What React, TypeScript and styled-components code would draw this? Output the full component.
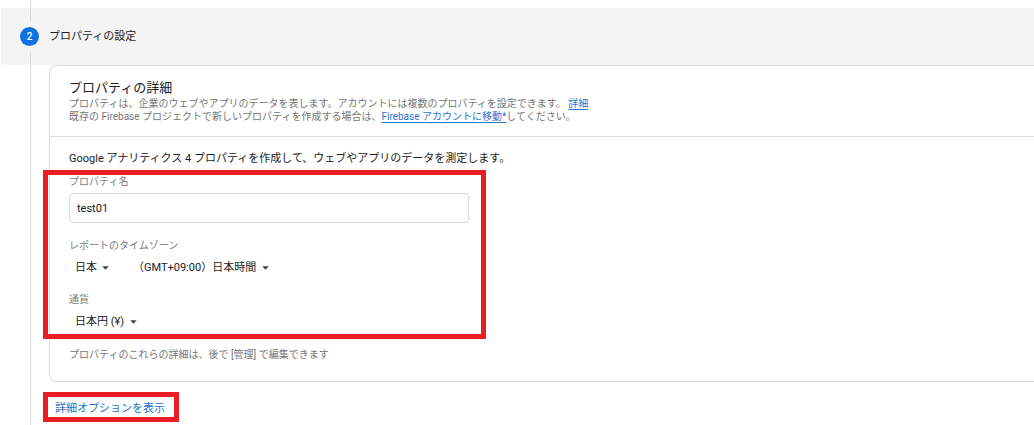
import React from 'react';
import styled, { createGlobalStyle } from 'styled-components';

const GlobalStyle = createGlobalStyle`
  *, *::before, *::after { box-sizing: border-box; }
  body {
    margin: 0;
    background: #fff;
    color: #202124;
    font-family: Roboto, "Noto Sans CJK JP", sans-serif;
    font-size: 11px;
    line-height: 16px;
  }
  button, input, select { font: inherit; color: inherit; }
  h2, h3, p { margin: 0; font-weight: 400; }
`;

const Page = styled.main`
  display: flex;
  flex-direction: column;
  min-height: 100vh;
  overflow: hidden;
`;

const Connector = styled.div<{ $height: number }>`
  width: 1px;
  height: ${p => p.$height}px;
  background: #d8d8d8;
`;

const LeadIn = styled.div`
  padding-left: 30px;
`;

const StepHeader = styled.header`
  display: flex;
  align-items: center;
  gap: 10px;
  margin-left: 1px;
  padding-left: 19px;
  background: #f4f4f4;
`;

const StepMarker = styled.div`
  display: flex;
  flex-direction: column;
  gap: 6px;
  width: 19px;

  ${Connector} { margin-left: 10px; }
`;

const StepNumber = styled.span`
  display: flex;
  align-items: center;
  justify-content: center;
  width: 19px;
  height: 19px;
  border-radius: 50%;
  background: #0b74e0;
  color: #fff;
  font-size: 10px;
  font-weight: 500;
`;

const StepTitle = styled.h2`
  font-size: 11px;
`;

const StepBody = styled.div`
  flex: 1;
  margin-left: 30px;
  padding: 0 0 8px 18px;
  border-left: 1px solid #d8d8d8;
`;

const Card = styled.section`
  border: 1px solid #d9dadc;
  border-right: 0;
  border-radius: 8px 0 0 8px;
`;

const CardHeader = styled.div`
  padding: 13px 19px;
  border-bottom: 1px solid #dedede;
`;

const CardTitle = styled.h3`
  font-size: 13px;
  line-height: 18px;
`;

const Hint = styled.p`
  color: #757575;
  font-size: 10px;
  line-height: 13px;
`;

const InlineLink = styled.a`
  color: #2a75d0;
  text-decoration: underline;
  text-underline-offset: 2px;
`;

const CardContent = styled.div`
  display: flex;
  flex-direction: column;
  padding: 14px 19px 20px;
`;

const Fields = styled.div`
  position: relative;
  display: flex;
  flex-direction: column;
  gap: 14px;
  max-width: 400px;
  margin: 8px 0 15px;
`;

const Field = styled.div`
  display: flex;
  flex-direction: column;
  gap: 4px;
`;

const Label = styled.label`
  color: #7b7b7b;
  font-size: 10px;
  line-height: 14px;
`;

const TextInput = styled.input`
  width: 100%;
  height: 30px;
  margin: 0 0 2px;
  padding: 0 7px;
  border: 1px solid #dadada;
  border-radius: 4px;
  background: #fff;
  outline: 0;
`;

const SelectRow = styled.div`
  display: flex;
  gap: 24px;
  padding-left: 6px;
`;

const SelectBox = styled.span`
  display: inline-flex;
  align-items: center;
  gap: 5px;
  height: 22px;
`;

const Select = styled.select`
  appearance: none;
  height: 22px;
  padding: 0;
  border: 0;
  background: transparent;
  outline: 0;
`;

const Highlight = styled.span<{ $inset: string }>`
  position: absolute;
  inset: ${p => p.$inset};
  border: 5px solid #eb1c24;
  pointer-events: none;
`;

const OptionsButton = styled.button`
  position: relative;
  display: block;
  margin: 19px 0 0 6px;
  padding: 0;
  border: 0;
  background: transparent;
  color: #1a73c8;
`;

const Caret = () => (
  <svg width="7" height="4" viewBox="0 0 7 4" aria-hidden="true">
    <path d="M0.3 0.3h6.4L3.5 3.7z" fill="#3c4043" />
  </svg>
);

function Dropdown({ id, label, value }: { id: string; label?: string; value: string }) {
  return (
    <SelectBox>
      <Select id={id} aria-label={label} defaultValue={value}>
        <option value={value}>{value}</option>
      </Select>
      <Caret />
    </SelectBox>
  );
}

export default function App() {
  return (
    <>
      <GlobalStyle />
      <Page lang="ja">
        <LeadIn><Connector $height={8} /></LeadIn>
        <StepHeader>
          <StepMarker>
            <Connector $height={13} />
            <StepNumber>2</StepNumber>
            <Connector $height={13} />
          </StepMarker>
          <StepTitle>プロパティの設定</StepTitle>
        </StepHeader>
        <StepBody>
          <Card>
            <CardHeader>
              <CardTitle>プロパティの詳細</CardTitle>
              <Hint>
                プロパティは、企業のウェブやアプリのデータを表します。アカウントには複数のプロパティを設定できます。{' '}
                <InlineLink href="#details">詳細</InlineLink>
              </Hint>
              <Hint>
                既存の Firebase プロジェクトで新しいプロパティを作成する場合は、
                <InlineLink href="#firebase">Firebase アカウントに移動*</InlineLink>
                してください。
              </Hint>
            </CardHeader>
            <CardContent>
              <p>Google アナリティクス 4 プロパティを作成して、ウェブやアプリのデータを測定します。</p>
              <Fields>
                <Field>
                  <Label htmlFor="property-name">プロパティ名</Label>
                  <TextInput id="property-name" type="text" defaultValue="test01" />
                </Field>
                <Field>
                  <Label htmlFor="country">レポートのタイムゾーン</Label>
                  <SelectRow>
                    <Dropdown id="country" value="日本" />
                    <Dropdown id="timezone" label="タイムゾーン" value="（GMT+09:00）日本時間" />
                  </SelectRow>
                </Field>
                <Field>
                  <Label htmlFor="currency">通貨</Label>
                  <SelectRow>
                    <Dropdown id="currency" value="日本円 (¥)" />
                  </SelectRow>
                </Field>
                <Highlight $inset="-5px -17px -6px -26px" />
              </Fields>
              <Hint>プロパティのこれらの詳細は、後で [管理] で編集できます</Hint>
            </CardContent>
          </Card>
          <OptionsButton type="button">
            詳細オプションを表示
            <Highlight $inset="-9px -14px -5px -12px" />
          </OptionsButton>
        </StepBody>
      </Page>
    </>
  );
}
